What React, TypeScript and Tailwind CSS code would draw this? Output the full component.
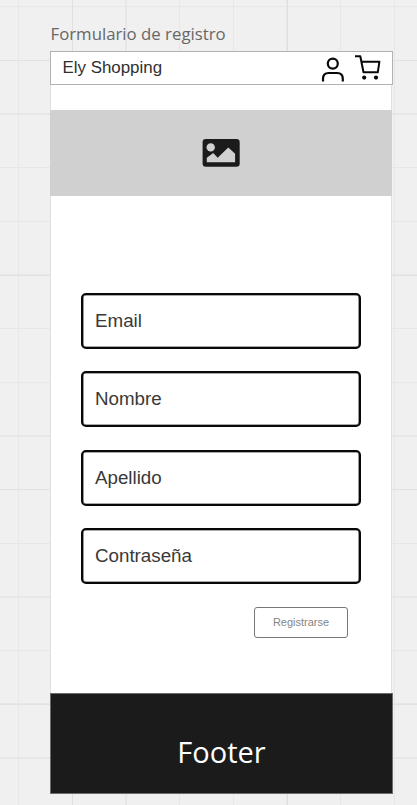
import React from 'react';

const fields = ['Email', 'Nombre', 'Apellido', 'Contraseña'];

function UserIcon() {
  return (
    <svg className="block h-[27px] w-[24px]" viewBox="0 0 24 27" fill="none" stroke="#080808" strokeWidth="2.2">
      <circle cx="11.8" cy="8.6" r="5" />
      <path d="M2 26.5v-2.7c0-3.6 2.1-5.8 5.6-5.8h8.6c3.5 0 5.6 2.2 5.6 5.8v2.7" />
    </svg>
  );
}

function CartIcon() {
  return (
    <svg className="block h-[27px] w-[27px]" viewBox="0 0 27 27" fill="none" stroke="#080808" strokeWidth="2">
      <path d="M0 1.3h5.3l3.2 16h14.3l1.6-10.6H6.5" strokeLinejoin="round" />
      <circle cx="9.2" cy="22.6" r="2.1" fill="#080808" stroke="none" />
      <circle cx="21" cy="22.6" r="2.1" fill="#080808" stroke="none" />
    </svg>
  );
}

function ImageIcon() {
  return (
    <svg className="block h-[28px] w-[38px]" viewBox="0 0 38 28">
      <rect x="0.6" y="0.1" width="37.1" height="27.7" rx="3.2" fill="#1b1b1b" />
      <circle cx="8.7" cy="8.4" r="4.2" fill="#d0d0d0" />
      <path d="M4.8 23.2v-4.5l6.4-4.8 4.5 4.8L26.3 8.6l6.8 6.2v8.4z" fill="#d0d0d0" />
    </svg>
  );
}

export default function App() {
  return (
    <div className="h-[805px] w-[417px] overflow-hidden bg-[#f0f0f0] bg-[linear-gradient(90deg,transparent_72px,#dfdfdf_72px,#dfdfdf_73px,transparent_73px,transparent_287px,#dfdfdf_287px,#dfdfdf_288px,transparent_288px),repeating-linear-gradient(180deg,transparent_0px,transparent_60px,#e2e2e2_60px,#e2e2e2_61px,transparent_61px,transparent_214.6px),repeating-linear-gradient(90deg,transparent_0px,transparent_18px,#e7e7e7_18px,#e7e7e7_19.5px,transparent_19.5px,transparent_53.65px),repeating-linear-gradient(180deg,transparent_0px,transparent_6px,#e7e7e7_6px,#e7e7e7_7.5px,transparent_7.5px,transparent_53.65px)] pl-[50px] font-['Liberation_Sans',Arial,sans-serif]">
      <div className="flex h-[51px] items-start pl-[0.5px] pt-[21px]">
        <h1 className="whitespace-nowrap font-['Open_Sans',sans-serif] text-[16.8px] leading-[25px] text-[#676767]">Formulario de registro</h1>
      </div>
      <main className="flex h-[743px] w-[343px] flex-col">
        <header className="flex h-[34px] shrink-0 items-start border border-[#b2b2b2] bg-white pl-[11.5px] pr-[10px]">
          <span className="mt-[6px] grow whitespace-nowrap text-[16.9px] leading-[20px] text-[#303030]">Ely Shopping</span>
          <div className="mt-[3px] flex gap-[10px]">
            <UserIcon />
            <CartIcon />
          </div>
        </header>
        <div className="mr-px flex grow flex-col border-x border-[#e0e0e0] bg-white pt-[25px]">
          <div className="-mx-px flex h-[86px] items-center justify-center bg-[#d0d0d0]">
            <ImageIcon />
          </div>
          <form className="mt-[97px] flex flex-col pl-[30px] pr-[30px]">
            <div className="flex flex-col gap-[22.4px]">
              {fields.map((field) => (
                <label key={field} className="flex h-[56px] w-[280px] items-center rounded-[5px] border-2 border-[#080808] pl-[12px] text-[18.75px] text-[#393939] shadow-[inset_0_0_0_0.6px_#555555]">
                  {field}
                </label>
              ))}
            </div>
            <button type="button" className="mr-[13px] mt-[23px] flex h-[31px] w-[94px] items-center justify-center self-end rounded-[3px] border border-[#777777] text-[11px] text-[#858585]">
              Registrarse
            </button>
          </form>
        </div>
        <footer className="flex h-[101px] shrink-0 items-center justify-center border border-[#6c6c6c] bg-[#1b1b1b] pt-[16px] font-['Open_Sans',sans-serif] text-[29px] text-white">
          Footer
        </footer>
      </main>
    </div>
  );
}
